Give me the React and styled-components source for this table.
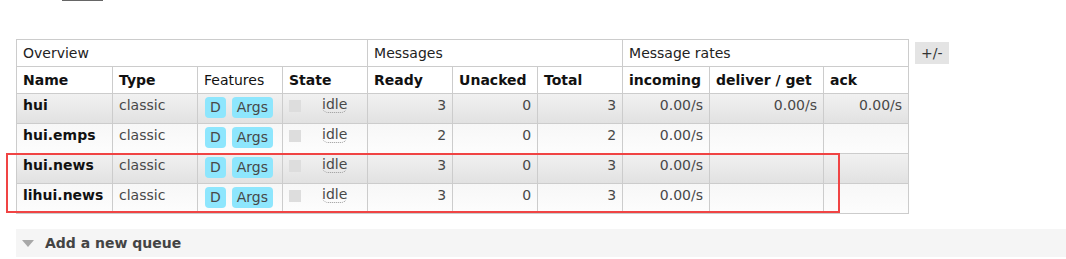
import React from "react";
import styled, { createGlobalStyle } from "styled-components";

const GlobalStyle = createGlobalStyle`
    body {
        margin: 0;
        background: #fff;
        font-family: "DejaVu Sans", Verdana, sans-serif;
        color: #484848;
    }
`

const Page = styled.div `
    padding-left: 16px;
`

const TabStrip = styled.div `
    height: 1px;
`

const TabMark = styled.div `
    margin-left: 46px;
    width: 41px;
    height: 1px;
    background: #666;
`

const ListArea = styled.div `
    display: flex;
    align-items: flex-start;
    gap: 6px;
    margin-top: 38px;
`

const TableWrap = styled.div `
    position: relative;
`

const Table = styled.table `
    border-collapse: collapse;
    table-layout: fixed;
    width: 892px;
    font-size: 14px;
`

const GroupCell = styled.th `
    border: 1px solid #ccc;
    height: 18px;
    padding: 4px 6px;
    line-height: 18px;
    text-align: left;
    font-weight: normal;
    color: #222;
    background: #fff;
`

const HeadCell = styled.th `
    border: 1px solid #ccc;
    height: 18px;
    padding: 4px 6px;
    line-height: 18px;
    text-align: left;
    font-weight: ${p => (p.$light ? "normal" : "bold")};
    color: #111;
    background: #fff;
    white-space: nowrap;
`

const Row = styled.tr `
    height: 30px;
    background: ${p => (p.$alt ? "linear-gradient(#f1f1f1, #e1e1e1)" : "linear-gradient(#f7f7f7, #fdfdfd)")};
`

const Cell = styled.td `
    border: 1px solid #ccc;
    padding: 3px 6px 0;
    line-height: 16px;
    vertical-align: top;
    text-align: ${p => (p.$num ? "right" : "left")};
    white-space: nowrap;
`

const QueueName = styled.span `
    font-weight: bold;
    color: #111;
`

const Features = styled.div `
    display: flex;
    gap: 6px;
    padding-left: 1px;
`

const Badge = styled.span `
    display: inline-block;
    padding: 4px 5px;
    line-height: 13px;
    border-radius: 4px;
    background: #8ee6fd;
    color: #484848;
`

const StateBox = styled.div `
    display: flex;
    align-items: flex-start;
    gap: 21px;
`

const StatusSquare = styled.span `
    width: 12px;
    height: 12px;
    margin-top: 3px;
    background: #ddd;
`

const Idle = styled.abbr `
    text-decoration: none;
    border-bottom: 1px dotted #999;
    border-radius: 0 0 6px 6px;
    line-height: 15px;
`

const Marker = styled.div `
    position: absolute;
    left: -10px;
    top: 114px;
    width: 830px;
    height: 56px;
    border: 2px solid #f04444;
    pointer-events: none;
`

const ToggleButton = styled.button `
    margin-top: 3px;
    padding: 0 6px;
    height: 22px;
    border: 0;
    background: #e4e4e4;
    font-family: "DejaVu Sans", Verdana, sans-serif;
    font-size: 14px;
    color: #333;
`

const Section = styled.div `
    display: flex;
    align-items: center;
    gap: 11px;
    margin-top: 15px;
    height: 28px;
    padding-left: 6px;
    background: #f5f5f5;
    font-size: 14px;
    font-weight: bold;
    color: #444;
`

const Arrow = styled.span `
    width: 0;
    height: 0;
    border-left: 6px solid transparent;
    border-right: 6px solid transparent;
    border-top: 7px solid #a8a8a8;
`

const columns = [96, 85, 85, 85, 85, 85, 85, 87, 114, 85];

const queues = [
    { name: "hui", ready: 3, unacked: 0, total: 3, rates: ["0.00/s", "0.00/s", "0.00/s"] },
    { name: "hui.emps", ready: 2, unacked: 0, total: 2, rates: ["0.00/s", "", ""] },
    { name: "hui.news", ready: 3, unacked: 0, total: 3, rates: ["0.00/s", "", ""] },
    { name: "lihui.news", ready: 3, unacked: 0, total: 3, rates: ["0.00/s", "", ""] },
];

function App() {
    return <>
        <GlobalStyle />
        <Page>
            <TabStrip><TabMark /></TabStrip>
            <ListArea>
                <TableWrap>
                    <Table>
                        <colgroup>
                            {columns.map((w, i) => <col key={i} style={{ width: w }} />)}
                        </colgroup>
                        <thead>
                            <tr>
                                <GroupCell colSpan={4}>Overview</GroupCell>
                                <GroupCell colSpan={3}>Messages</GroupCell>
                                <GroupCell colSpan={3}>Message rates</GroupCell>
                            </tr>
                            <tr>
                                <HeadCell>Name</HeadCell>
                                <HeadCell>Type</HeadCell>
                                <HeadCell $light>Features</HeadCell>
                                <HeadCell>State</HeadCell>
                                <HeadCell>Ready</HeadCell>
                                <HeadCell>Unacked</HeadCell>
                                <HeadCell>Total</HeadCell>
                                <HeadCell>incoming</HeadCell>
                                <HeadCell>deliver / get</HeadCell>
                                <HeadCell>ack</HeadCell>
                            </tr>
                        </thead>
                        <tbody>
                            {queues.map((q, index) => (
                                <Row key={q.name} $alt={index % 2 === 0}>
                                    <Cell><QueueName>{q.name}</QueueName></Cell>
                                    <Cell>classic</Cell>
                                    <Cell>
                                        <Features>
                                            <Badge>D</Badge>
                                            <Badge>Args</Badge>
                                        </Features>
                                    </Cell>
                                    <Cell>
                                        <StateBox>
                                            <StatusSquare />
                                            <Idle>idle</Idle>
                                        </StateBox>
                                    </Cell>
                                    <Cell $num>{q.ready}</Cell>
                                    <Cell $num>{q.unacked}</Cell>
                                    <Cell $num>{q.total}</Cell>
                                    {q.rates.map((r, i) => <Cell $num key={i}>{r}</Cell>)}
                                </Row>
                            ))}
                        </tbody>
                    </Table>
                    <Marker />
                </TableWrap>
                <ToggleButton>+/-</ToggleButton>
            </ListArea>
            <Section>
                <Arrow />
                Add a new queue
            </Section>
        </Page>
    </>
}

export default App;
